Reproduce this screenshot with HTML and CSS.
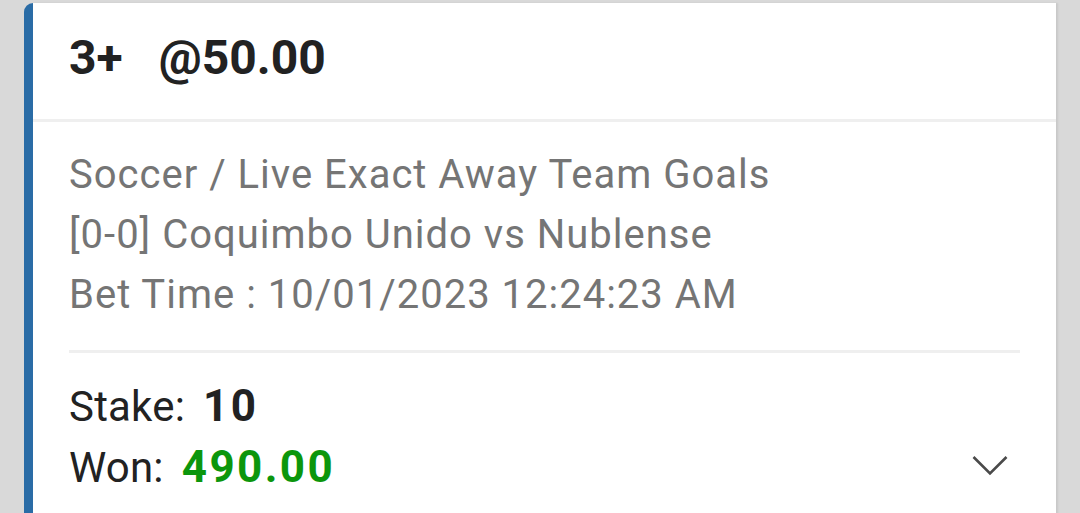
FILE: index.html
```html
<!DOCTYPE html>
<html>
<head>
<meta charset="utf-8">
<link rel="stylesheet" href="styles.css">
</head>
<body>
<div class="card">
  <div class="head">
    <span class="sel">3+</span><span class="odds">@50.00</span>
  </div>
  <div class="rule-full"></div>
  <div class="body">
    <div class="info">
      <div class="line">Soccer / Live Exact Away Team Goals</div>
      <div class="line">[0-0] Coquimbo Unido vs Nublense</div>
      <div class="line">Bet Time : 10/01/2023 12:24:23 AM</div>
    </div>
    <div class="rule"></div>
    <div class="foot">
      <div class="amounts">
        <div class="row"><span class="lbl">Stake:</span><span class="val">10</span></div>
        <div class="row"><span class="lbl">Won:</span><span class="val won">490.00</span></div>
      </div>
      <svg class="chev" width="36" height="22" viewBox="0 0 36 22"><path d="M1.5 2 L18 18.5 L34.5 2" fill="none" stroke="#4a4a4a" stroke-width="2.6"/></svg>
    </div>
  </div>
</div>
</body>
</html>
```

FILE: styles.css
```css
html, body {
  margin: 0;
  padding: 0;
  background: #d9d9d9;
  height: 100%;
  overflow: hidden;
}
body {
  font-family: Roboto, "Liberation Sans", Arial, sans-serif;
  padding: 3px 24px 0 24px;
  box-sizing: border-box;
}
.card {
  background: #fff;
  border-left: 9px solid #2a6ca6;
  border-top-left-radius: 9px;
  box-shadow: 2px 0 2px rgba(0,0,0,0.08);
  height: 560px;
}
.head {
  height: 116px;
  display: flex;
  align-items: center;
  padding-left: 36px;
  padding-bottom: 7px;
  font-weight: 700;
  font-size: 48px;
  color: #222;
  box-sizing: border-box;
}
.sel {
  margin-right: 36px;
}
.rule-full {
  height: 3px;
  background: #efefef;
}
.body {
  padding: 0 36px 0 36px;
}
.info {
  padding-top: 23px;
  padding-bottom: 25px;
}
.line {
  font-size: 40px;
  line-height: 60px;
  color: #757575;
  letter-spacing: 1px;
}
.rule {
  height: 3px;
  background: #efefef;
}
.foot {
  display: flex;
  align-items: flex-end;
  justify-content: space-between;
  padding-top: 23px;
}
.row {
  line-height: 60px;
  font-size: 42px;
  letter-spacing: 0.2px;
  color: #222;
  display: flex;
  align-items: baseline;
}
.lbl {
  margin-right: 18px;
}
.val {
  font-weight: 700;
  font-size: 44px;
  letter-spacing: 2.4px;
}
.won {
  color: #0c960c;
}
.chev {
  margin-right: 12px;
  margin-bottom: 21px;
}
```
